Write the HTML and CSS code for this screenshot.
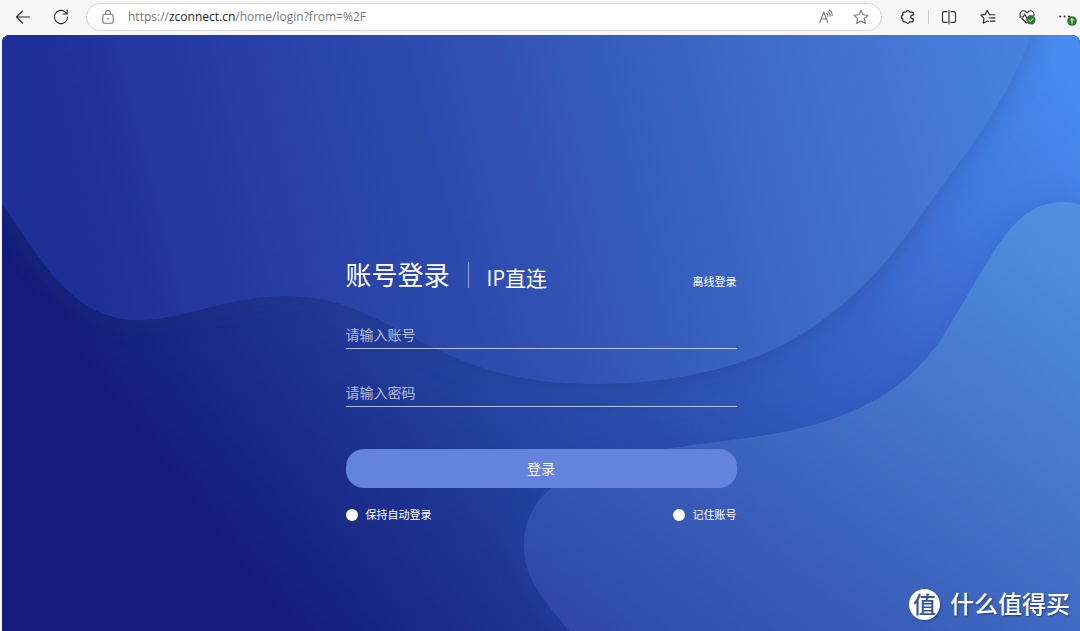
FILE: index.html
```html
<!DOCTYPE html>
<html lang="zh-CN">
<head>
<meta charset="utf-8">
<meta name="viewport" content="width=device-width, initial-scale=1">
<title>账号登录</title>
<link rel="stylesheet" href="styles.css">
</head>
<body>
<header class="toolbar">
  <button class="tool" type="button" aria-label="Back">
    <svg class="icon" viewBox="0 0 16 16"><path d="M14.5 8H1.5M7.5 2 1.5 8l6 6"/></svg>
  </button>
  <button class="tool" type="button" aria-label="Refresh">
    <svg class="icon" viewBox="0 0 16 16"><path d="M14.6 8A6.6 6.6 0 1 1 11.8 2.6L14 4.8M14.2 1v4h-4"/></svg>
  </button>
  <div class="address">
    <svg class="icon icon-muted" viewBox="0 0 16 16"><rect x="2.8" y="5.2" width="10.4" height="9" rx="1.6"/><path d="M5.6 5.2V3.8a2.4 2.4 0 0 1 4.8 0v1.4"/><circle class="dot" cx="8" cy="9.7" r=".8"/></svg>
    <div class="url" role="textbox" aria-label="Address" contenteditable="true" spellcheck="false">https://<span class="url-host">zconnect.cn</span>/home/login?from=%2F</div>
    <button class="tool tool-muted" type="button" aria-label="Read aloud">
      <svg class="icon icon-muted" viewBox="0 0 16 16"><path d="M1.8 13.5 5.8 3l4 10.5M3.3 10h5M8.6 4.2q1.5 1 1.5 3M10 2.6q2.2 1.4 2.2 4.4M11.4 1q2.8 2 2.8 5.6"/></svg>
    </button>
    <button class="tool tool-muted" type="button" aria-label="Add to favorites">
      <svg class="icon icon-muted" viewBox="0 0 16 16"><path d="m8 1.3 2 4.4 4.9.6-3.6 3.3 1 4.9L8 12.1l-4.3 2.4 1-4.9L1.1 6.3 6 5.7z"/></svg>
    </button>
  </div>
  <div class="tools">
    <button class="tool" type="button" aria-label="Extensions">
      <svg class="icon icon-strong" viewBox="0 0 16 16"><path d="M4 3.1h1.9a2 2 0 0 1 3.8 0h2.2q1.3 0 1.3 1.3v1.8h-.7a1.8 1.8 0 0 0 0 3.6h.7v1.8q0 1.3-1.3 1.3H9.7a2 2 0 0 1-3.8 0H4q-1.3 0-1.3-1.3V9.8a1.9 1.9 0 0 1 0-3.6V4.4Q2.700 3.100 4 3.100z"/></svg>
    </button>
    <span class="tool-divider"></span>
    <button class="tool" type="button" aria-label="Split screen">
      <svg class="icon" viewBox="0 0 16 16"><path d="M6 2.600H3.200Q1.500 2.600 1.500 4.300v7.400q0 1.700 1.700 1.700H6M10 2.600h2.800q1.700 0 1.700 1.700v7.400q0 1.700-1.700 1.700H10M8 1.200v13.600"/></svg>
    </button>
    <button class="tool" type="button" aria-label="Favorites">
      <svg class="icon" viewBox="0 0 16 16"><path d="M9.600 5.700H15M11 8.900h4M10.200 12.100H15M9.200 5.200 7.200 1.200 5.200 5.400.8 6.100 4 9.300l-.8 4.900 4-2.200 1.300.6M9.200 5.200l.5.500M9 9h1"/></svg>
    </button>
    <button class="tool" type="button" aria-label="Browser essentials">
      <svg class="icon" viewBox="0 0 16 16"><path d="M1.300 7C.3 4.600 1.800 1.800 4.400 1.800 6 1.800 7 2.600 8 3.800c1-1.200 2-2 3.600-2 2.600 0 4.100 2.800 3.100 5.200M2.800 9.500 7.500 14M.8 8h3.400l1.600-2.800 2.400 5L9.800 7h4"/></svg>
      <svg class="badge badge-check" viewBox="0 0 10 10"><circle cx="5" cy="5" r="4.600"/><path d="m2.800 5.100 1.500 1.500 2.800-3"/></svg>
    </button>
    <button class="tool" type="button" aria-label="Settings and more">
      <svg class="icon" viewBox="0 0 16 16"><g class="dot"><circle cx="2.200" cy="7.500" r="1.100"/><circle cx="6.600" cy="7.500" r="1.100"/><circle cx="11" cy="7.500" r="1.100"/></g></svg>
      <svg class="badge badge-update" viewBox="0 0 10 10"><circle cx="5" cy="5" r="4.800"/><path d="M5 7.600V2.600M3.200 4.300 5 2.500l1.800 1.800"/></svg>
    </button>
  </div>
</header>

<main class="stage">
  <svg class="waves" viewBox="2 35 1078 596" preserveAspectRatio="none" aria-hidden="true">
    <defs>
      <linearGradient id="base" gradientUnits="userSpaceOnUse" x1="175" y1="480" x2="930" y2="-102">
        <stop offset="0" stop-color="#141c79"/>
        <stop offset=".19" stop-color="#1d3390"/>
        <stop offset=".33" stop-color="#2645a2"/>
        <stop offset=".51" stop-color="#2e54b5"/>
        <stop offset=".67" stop-color="#3963c9"/>
        <stop offset=".83" stop-color="#4177dd"/>
        <stop offset="1" stop-color="#498aee"/>
      </linearGradient>
      <linearGradient id="upper" gradientUnits="userSpaceOnUse" x1="80" y1="250" x2="1010" y2="20">
        <stop offset="0" stop-color="#1f2f98"/>
        <stop offset=".45" stop-color="#3050b2"/>
        <stop offset=".72" stop-color="#3d6ac6"/>
        <stop offset="1" stop-color="#4881dc"/>
      </linearGradient>
      <linearGradient id="lower" gradientUnits="userSpaceOnUse" x1="620" y1="680" x2="1000" y2="180">
        <stop offset="0" stop-color="#2f47a7"/>
        <stop offset=".3" stop-color="#385bb7"/>
        <stop offset=".52" stop-color="#406cc4"/>
        <stop offset=".75" stop-color="#487dcf"/>
        <stop offset="1" stop-color="#518fde"/>
      </linearGradient>
      <filter id="shade" x="-10%" y="-10%" width="120%" height="130%"><feGaussianBlur stdDeviation="14"/></filter>
      <path id="crest" d="M-40 0V150L2 204C40 256 70 320 138 320 185 320 225 296 288 296 392 296 430 384 592 384 690 384 758 360 795 338 880 288 918 217 950 175 985 128 1010 90 1031 36L1040 0Z"/>
      <path id="swell" d="M569 631C545 600 524 580 524 545 524 462 640 452 747 438 850 424 905 393 943 336 990 262 1010 202 1063 202 1070 202 1076 203 1080 205V631Z"/>
    </defs>
    <rect x="2" y="35" width="1078" height="596" fill="url(#base)"/>
    <use href="#crest" fill="#1a3068" opacity=".3" filter="url(#shade)"/>
    <use href="#swell" fill="#2448a8" opacity=".25" filter="url(#shade)"/>
    <use href="#crest" fill="url(#upper)"/>
    <use href="#swell" fill="url(#lower)"/>
  </svg>

  <form class="login">
    <div class="login-head">
      <button class="tab tab-active" type="button">账号登录</button>
      <span class="tab-divider"></span>
      <button class="tab" type="button">IP直连</button>
      <a class="offline" href="#">离线登录</a>
    </div>
    <input class="field" type="text" placeholder="请输入账号" aria-label="请输入账号">
    <input class="field" type="password" placeholder="请输入密码" aria-label="请输入密码">
    <button class="submit" type="submit">登录</button>
    <div class="options">
      <label class="option"><input class="check" type="checkbox">保持自动登录</label>
      <label class="option"><input class="check" type="checkbox">记住账号</label>
    </div>
  </form>

  <div class="watermark">
    <span class="watermark-logo">值</span>
    <span>什么值得买</span>
  </div>
</main>
</body>
</html>
```

FILE: styles.css
```css
* {
  box-sizing: border-box;
}

body {
  margin: 0;
  min-height: 100vh;
  display: flex;
  flex-direction: column;
  background: #f7f7f7;
  font-family: "Open Sans", "Noto Sans CJK SC", sans-serif;
}

button,
input {
  font-family: inherit;
  margin: 0;
  padding: 0;
  border: 0;
  background: none;
}

.toolbar {
  display: flex;
  align-items: center;
  height: 34px;
  margin-bottom: 1px;
  padding: 0 6px 0 15px;
  gap: 22px;
}

.tool {
  position: relative;
  display: flex;
  flex: none;
}

.icon {
  display: block;
  flex: none;
  width: 16px;
  height: 16px;
  fill: none;
  stroke: #2b2b2b;
  stroke-width: 1.1;
  stroke-linecap: round;
  stroke-linejoin: round;
}

.icon-strong {
  stroke-width: 1.3;
}

.icon-muted {
  stroke: #777;
}

.icon .dot {
  fill: #333;
  stroke: none;
}

.address {
  flex: 1;
  display: flex;
  align-items: center;
  height: 28px;
  margin-right: -4px;
  margin-left: -5px;
  padding: 0 12px 0 13px;
  gap: 12px;
  border: 1px solid #d6d6d6;
  border-radius: 14px;
  background: #fff;
}

.url {
  flex: 1;
  font-size: 12px;
  line-height: 18px;
  color: #767676;
  white-space: nowrap;
  outline: none;
}

.url-host {
  color: #1c1c1c;
}

.tool-muted + .tool-muted {
  margin-left: 7px;
}

.tools {
  display: flex;
  align-items: center;
  gap: 23px;
}

.tool-divider {
  width: 1px;
  height: 14px;
  margin: 0 -11px;
  background: #ccc;
}

.badge {
  position: absolute;
  width: 10px;
  height: 10px;
  fill: #2d7a30;
  stroke: #fff;
  stroke-width: 1;
}

.badge circle {
  stroke: none;
}

.badge path {
  fill: none;
}

.badge-check {
  right: -1px;
  bottom: 0;
}

.badge-update {
  right: -3px;
  bottom: -1px;
}

.stage {
  position: relative;
  flex: 1;
  margin-left: 2px;
  padding: 223px 24px 104px;
  border-radius: 8px 8px 0 0;
  overflow: hidden;
  background: #141c79;
  color: #fff;
}

.waves {
  position: absolute;
  inset: 0;
  width: 100%;
  height: 100%;
}

.login {
  position: relative;
  display: flex;
  flex-direction: column;
  max-width: 391px;
  margin: 0 auto;
}

.login-head {
  display: flex;
  align-items: center;
  height: 34px;
  margin-bottom: 31px;
}

.tab {
  padding-top: 6px;
  font-size: 21px;
  line-height: 32px;
  color: #fff;
  white-space: nowrap;
}

.tab-active {
  padding-top: 0;
  font-size: 26px;
  line-height: 36px;
}

.tab-divider {
  width: 1px;
  height: 26px;
  margin: 0 18px;
  background: rgba(255, 255, 255, .5);
}

.offline {
  margin-left: auto;
  padding-top: 14px;
  font-size: 11px;
  line-height: 16px;
  color: #fff;
  text-decoration: none;
}

.field {
  height: 26px;
  margin-bottom: 32px;
  padding-bottom: 2px;
  border-bottom: 1px solid rgba(255, 255, 255, .65);
  border-radius: 0;
  font-size: 14px;
  color: #fff;
  outline: none;
}

.field::placeholder {
  color: rgba(255, 255, 255, .68);
  opacity: 1;
}

.submit {
  height: 39px;
  margin-top: 10px;
  padding-bottom: 2px;
  border-radius: 18px;
  background: #6583dc;
  font-size: 14px;
  color: #fff;
}

.options {
  display: flex;
  justify-content: space-between;
  margin-top: 19px;
}

.option {
  display: flex;
  align-items: center;
  gap: 8px;
  font-size: 11px;
  line-height: 16px;
}

.check {
  appearance: none;
  width: 12px;
  height: 12px;
  border-radius: 50%;
  background: #fff;
}

.check:checked {
  border: 3px solid #fff;
  background: #3050b2;
}

.watermark {
  position: absolute;
  right: 10px;
  bottom: 10px;
  display: flex;
  align-items: center;
  gap: 10px;
  font-size: 24px;
  font-weight: 500;
  line-height: 34px;
  text-shadow: 1px 1px 2px rgba(20, 40, 100, .7);
}

.watermark-logo {
  width: 31px;
  height: 31px;
  border-radius: 50%;
  background: #fff;
  box-shadow: 1px 1px 2px rgba(20, 40, 100, .5);
  color: #34549f;
  font-size: 23px;
  font-style: oblique 8deg;
  font-weight: 500;
  line-height: 30px;
  text-align: center;
  text-shadow: none;
}
```
